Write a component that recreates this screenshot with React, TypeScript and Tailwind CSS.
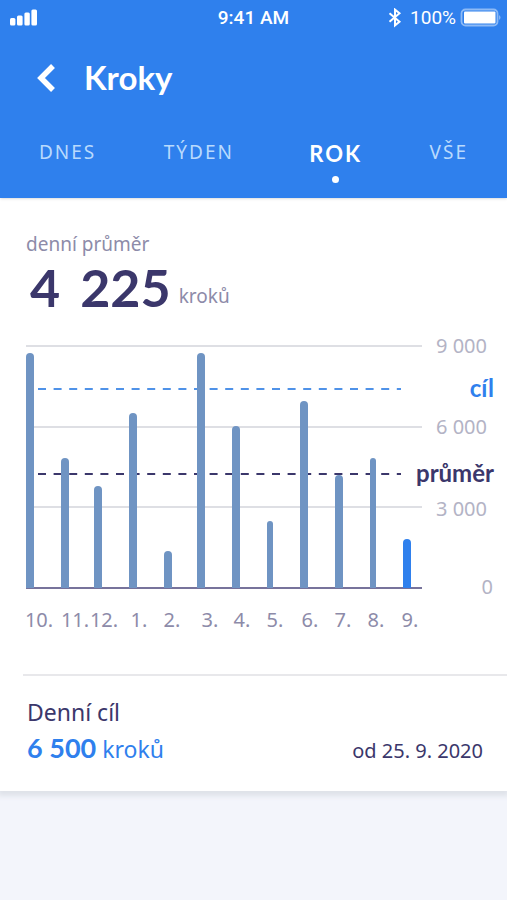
import { useState } from "react";
import clsx from "clsx";

type Bar = {
  month: string;
  x: number;
  labelX: number;
  height: number;
  width?: number;
  current?: boolean;
};

const TABS = ["DNES", "TÝDEN", "ROK", "VŠE"];

const BASELINE = 244;

const BARS: Bar[] = [
  { month: "10.", x: 4, labelX: 13, height: 235 },
  { month: "11.", x: 39, labelX: 49, height: 130 },
  { month: "12.", x: 72, labelX: 78, height: 102 },
  { month: "1.", x: 107, labelX: 113, height: 175 },
  { month: "2.", x: 142, labelX: 146, height: 37 },
  { month: "3.", x: 175, labelX: 184, height: 235 },
  { month: "4.", x: 210, labelX: 216, height: 162 },
  { month: "5.", x: 244, labelX: 249, height: 67, width: 6 },
  { month: "6.", x: 278, labelX: 284, height: 187 },
  { month: "7.", x: 313, labelX: 317, height: 113 },
  { month: "8.", x: 347, labelX: 350, height: 130, width: 6 },
  { month: "9.", x: 381, labelX: 384, height: 49, current: true },
];

const SCALE = [
  { label: "9 000", y: 2, labelX: 461 },
  { label: "6 000", y: 83, labelX: 461 },
  { label: "3 000", y: 165, labelX: 461 },
  { label: "0", y: 243, labelX: 467 },
];

function barPath({ x, height, width = 8 }: Bar): string {
  const r = width / 2;
  const top = BASELINE - height + r;
  return `M${x - r} ${BASELINE}V${top}a${r} ${r} 0 0 1 ${width} 0V${BASELINE}z`;
}

function StatusBar() {
  return (
    <div className="grid h-9 grid-cols-3 items-center px-1 font-[Roboto,sans-serif] text-[19px]">
      <svg className="ml-[6px]" width="28" height="18" viewBox="0 0 28 18" fill="currentColor" aria-hidden="true">
        <rect x="0" y="9" width="5.4" height="7.5" rx="1.5" />
        <rect x="7" y="6.5" width="5.6" height="10" rx="1.5" />
        <rect x="14.4" y="3.5" width="5.4" height="13" rx="1.5" />
        <rect x="21.4" y="0.5" width="5.6" height="16" rx="1.5" />
      </svg>
      <span className="text-center font-medium">9:41 AM</span>
      <div className="flex items-center justify-end">
        <svg width="14" height="20" viewBox="0 0 14 20" fill="none" stroke="currentColor" strokeWidth="2" aria-hidden="true">
          <path d="M1.5 5.2l10 8.6L7 17.4V1.6l4.5 3.6-10 8.6" />
        </svg>
        <span className="ml-2 mr-1">100%</span>
        <svg width="43" height="20" viewBox="0 0 43 20" aria-hidden="true">
          <rect x="1.5" y="1.5" width="36" height="16" rx="4" fill="none" stroke="#8dbaf6" strokeWidth="1.8" />
          <rect x="4" y="3.5" width="31.5" height="12" rx="1" fill="#fff" />
          <path d="M39.3 7q2.2 2.5 0 5z" fill="#a9cbf8" />
        </svg>
      </div>
    </div>
  );
}

function StepsChart() {
  return (
    <svg viewBox="0 0 468 290" className="mt-7 block w-full overflow-visible text-xl" role="img" aria-label="Kroky">
      <g stroke="#dedfe4" strokeWidth="2">
        <path d="M0 2H396M0 83H396M0 163H396" />
      </g>
      <path d="M12 45H375" stroke="#4f92e8" strokeWidth="2" strokeDasharray="8 7.6" />
      <path d="M12 130H375" stroke="#3b376b" strokeWidth="2" strokeDasharray="8 7.6" />
      <path d="M0 244H396" stroke="#77739b" strokeWidth="2" />
      {BARS.map((bar) => (
        <g key={bar.month}>
          <path d={barPath(bar)} fill={bar.current ? "#2f80ed" : "#6f94c3"} />
          <text x={bar.labelX} y="283" textAnchor="middle" fill="#8d8ba9">
            {bar.month}
          </text>
        </g>
      ))}
      {SCALE.map((tick) => (
        <text key={tick.label} x={tick.labelX} y={tick.y + 7} textAnchor="end" fill="#b3b3c5">
          {tick.label}
        </text>
      ))}
      <g className="font-[Lato,sans-serif] text-2xl font-bold" textAnchor="end">
        <text x="468" y="53" fill="#2f80ed">cíl</text>
        <text x="468" y="138" fill="#3b376b">průměr</text>
      </g>
    </svg>
  );
}

export default function App() {
  const [active, setActive] = useState("ROK");

  return (
    <div className="min-h-screen bg-[#f3f5fb] font-['Noto_Sans',sans-serif]">
      <header className="relative bg-[#2f80ed] text-white shadow-sm">
        <StatusBar />
        <div className="flex h-[84px] items-center pl-9">
          <button type="button" aria-label="Zpět">
            <svg width="20" height="30" viewBox="0 0 20 30" fill="none" stroke="currentColor" strokeWidth="5.5" aria-hidden="true">
              <path d="M17 3L5 15l12 12" />
            </svg>
          </button>
          <h1 className="ml-7 font-[Lato,sans-serif] text-[33px] font-bold">Kroky</h1>
        </div>
        <nav className="flex h-[78px] items-start justify-between px-[39px] pt-4">
          {TABS.map((tab) => (
            <button
              key={tab}
              type="button"
              onClick={() => setActive(tab)}
              className={clsx(
                "flex flex-col items-center tracking-[2px]",
                tab === active
                  ? "pl-2 font-[Lato,sans-serif] text-[22px] font-bold leading-9"
                  : "text-[19px] leading-8 text-[#b9dafd]"
              )}
            >
              {tab}
              {tab === active && <span className="mt-1 size-[7px] rounded-full bg-white" />}
            </button>
          ))}
        </nav>
      </header>

      <main className="bg-white pb-5 shadow-[0_3px_5px_2px_#dfe2e9]">
        <section className="pl-[26px] pr-[13px] pt-8 text-[#8d8ba9]">
          <p className="text-[19px] leading-7">denní průměr</p>
          <p className="flex items-end gap-2 text-[19px] leading-8">
            <strong className="flex gap-5 pl-1 font-[Lato,sans-serif] text-[52px] leading-[58px] text-[#3b376b]">
              <span>4</span> <span>225</span>
            </strong>
            <span className="pb-1">kroků</span>
          </p>
          <StepsChart />
        </section>

        <section className="ml-[23px] mt-10 border-t-2 border-[#e8e8eb] pl-1 pr-6 pt-5 text-[#3b376b]">
          <h2 className="text-[23px] leading-8">Denní cíl</h2>
          <div className="flex items-baseline justify-between leading-[40px]">
            <p className="text-[23px] text-[#2f80ed]">
              <strong className="font-[Lato,sans-serif] text-[27px]">6 500</strong> kroků
            </p>
            <p className="text-[20px]">od 25. 9. 2020</p>
          </div>
        </section>
      </main>
    </div>
  );
}
